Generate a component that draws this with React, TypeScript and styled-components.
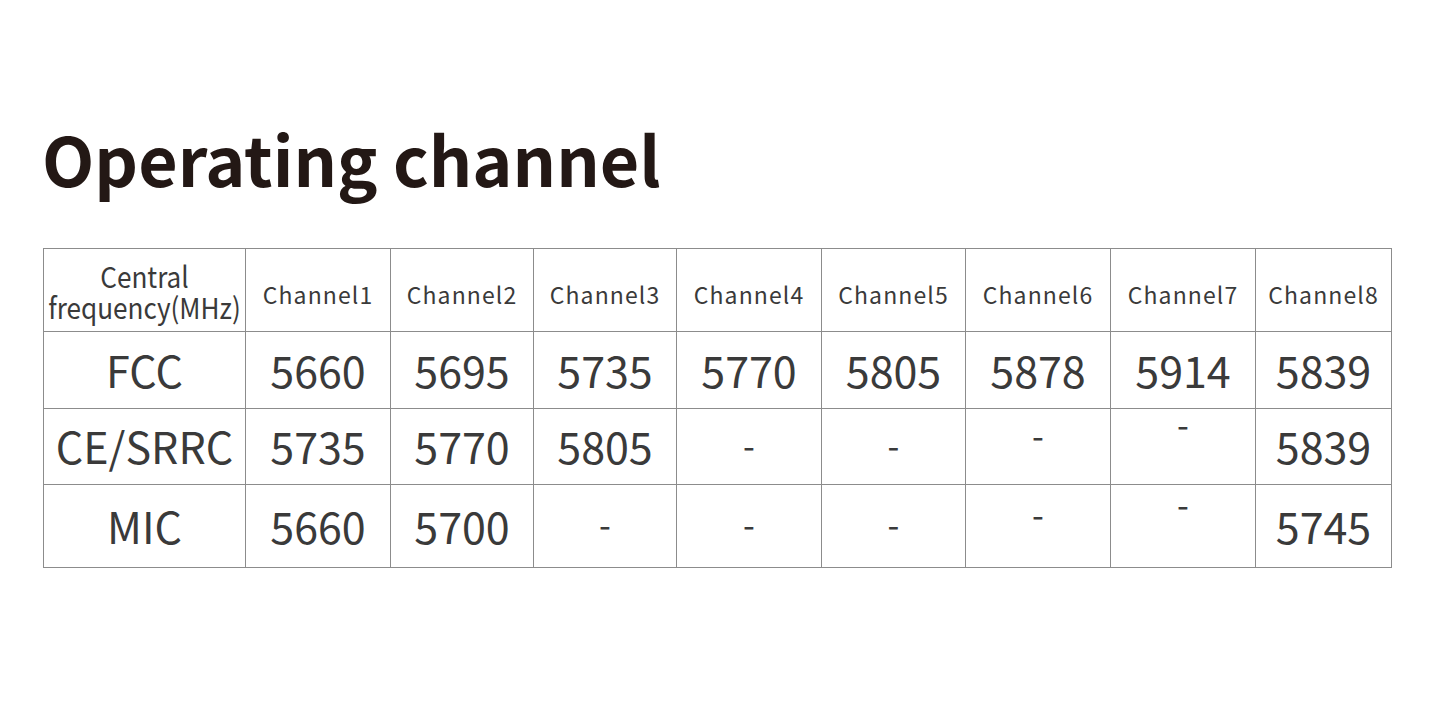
import React from "react";
import styled, {createGlobalStyle} from "styled-components";

const GlobalStyle = createGlobalStyle`
  html, body {
    margin: 0;
    padding: 0;
    background: #ffffff;
  }
  body {
    font-family: "Noto Sans CJK SC", "Noto Sans", sans-serif;
  }
`;

const Page = styled.div`
  width: 1445px;
  height: 702px;
  padding: 114px 0 0 42px;
  box-sizing: border-box;
  overflow: hidden;
`;

const Title = styled.h1`
  margin: 0;
  font-size: 68px;
  font-weight: 700;
  line-height: 88px;
  color: #231815;
`;

const Table = styled.table`
  margin-top: 46px;
  margin-left: 1px;
  border-collapse: collapse;
  table-layout: fixed;
  width: 1348px;
  color: #3a3a3a;
`;

const Row = styled.tr<{ $h: number }>`
  height: ${p => p.$h}px;
`;

const Cell = styled.td`
  border: 1.5px solid #8c8c8c;
  text-align: center;
  vertical-align: middle;
  padding: 0;
`;

const HeadLabel = styled.div`
  display: flex;
  flex-direction: column;
  align-items: center;
  transform: scaleX(0.9);
  padding-top: 2px;
`;

const HeadLine = styled.span`
  display: block;
  font-size: 29px;
  line-height: 31px;
  height: 31px;
  white-space: nowrap;
`;

const ChannelName = styled.div`
  font-size: 23px;
  letter-spacing: 1.1px;
  padding-top: 7px;
`;

const Value = styled.span`
  font-size: 43px;
  line-height: 1;
`;

const Dash = styled.div<{ $lift: number }>`
  font-size: 34px;
  line-height: 1;
  padding-bottom: ${p => p.$lift}px;
  margin-top: -4px;
`;

const widths = [202, 145, 143, 143, 145, 144, 145, 145, 136];

type Entry = string | { lift: number };

const rows: { name: string; h: number; values: Entry[] }[] = [
  {name: "FCC", h: 77, values: ["5660", "5695", "5735", "5770", "5805", "5878", "5914", "5839"]},
  {name: "CE/SRRC", h: 76, values: ["5735", "5770", "5805", {lift: 0}, {lift: 0}, {lift: 20}, {lift: 42}, "5839"]},
  {name: "MIC", h: 83, values: ["5660", "5700", {lift: 0}, {lift: 0}, {lift: 0}, {lift: 20}, {lift: 40}, "5745"]},
];

export default function App() {
  return (
    <>
      <GlobalStyle/>
      <Page>
        <Title>Operating channel</Title>
        <Table>
          <colgroup>
            {widths.map((w, i) => <col key={i} style={{width: w}}/>)}
          </colgroup>
          <tbody>
          <Row $h={83}>
            <Cell>
              <HeadLabel>
                <HeadLine>Central</HeadLine>
                <HeadLine>frequency(MHz)</HeadLine>
              </HeadLabel>
            </Cell>
            {[1, 2, 3, 4, 5, 6, 7, 8].map(n => (
              <Cell key={n}><ChannelName>Channel{n}</ChannelName></Cell>
            ))}
          </Row>
          {rows.map(r => (
            <Row $h={r.h} key={r.name}>
              <Cell><Value>{r.name}</Value></Cell>
              {r.values.map((v, i) => (
                <Cell key={i}>
                  {typeof v === "string"
                    ? <Value>{v}</Value>
                    : <Dash $lift={v.lift}>-</Dash>}
                </Cell>
              ))}
            </Row>
          ))}
          </tbody>
        </Table>
      </Page>
    </>
  );
}
